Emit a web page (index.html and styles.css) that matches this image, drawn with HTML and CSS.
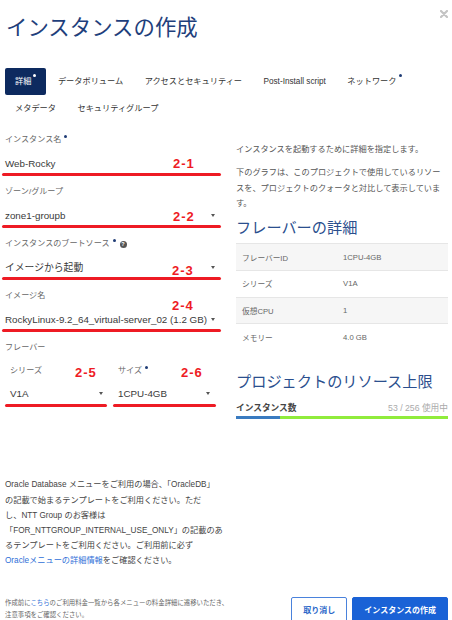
FILE: index.html
```html
<!DOCTYPE html>
<html lang="ja">
<head>
<meta charset="utf-8">
<title>インスタンスの作成</title>
<link rel="stylesheet" href="styles.css">
</head>
<body>
<div class="modal">
  <header class="head">
    <h1 class="title">インスタンスの作成</h1>
    <span class="close"><svg width="8" height="8" viewBox="0 0 8 8"><path d="M1 1L7 7M7 1L1 7" stroke="#c4c4c4" stroke-width="2.2" stroke-linecap="round"/></svg></span>
  </header>

  <nav class="tabs">
    <span class="tab active">詳細<i class="dot"></i></span>
    <span class="tab">データボリューム</span>
    <span class="tab">アクセスとセキュリティー</span>
    <span class="tab">Post-Install script</span>
    <span class="tab">ネットワーク<i class="dot"></i></span>
    <span class="tab">メタデータ</span>
    <span class="tab">セキュリティグループ</span>
  </nav>

  <div class="body">
    <div class="left">
      <div class="field">
        <div class="label">インスタンス名<i class="req"></i></div>
        <div class="control"><span>Web-Rocky</span></div>
        <div class="redline"></div>
        <span class="mark m1">2-1</span>
      </div>
      <div class="field">
        <div class="label">ゾーン/グループ</div>
        <div class="control"><span>zone1-groupb</span><i class="caret"></i></div>
        <div class="redline"></div>
        <span class="mark m2">2-2</span>
      </div>
      <div class="field">
        <div class="label">インスタンスのブートソース<i class="req"></i><span class="help">?</span></div>
        <div class="control"><span>イメージから起動</span><i class="caret"></i></div>
        <div class="redline"></div>
        <span class="mark m3">2-3</span>
      </div>
      <div class="field">
        <div class="label">イメージ名</div>
        <div class="control"><span>RockyLinux-9.2_64_virtual-server_02 (1.2 GB)</span><i class="caret"></i></div>
        <div class="redline"></div>
        <span class="mark m4">2-4</span>
      </div>
      <div class="flavor">
        <div class="label">フレーバー</div>
        <div class="flavor-row">
          <div class="sub">
            <div class="label sub-label">シリーズ</div>
            <div class="control sub-control"><span>V1A</span><i class="caret"></i></div>
            <div class="redline sub-line"></div>
            <span class="mark m5">2-5</span>
          </div>
          <div class="sub">
            <div class="label sub-label">サイズ<i class="req"></i></div>
            <div class="control sub-control"><span>1CPU-4GB</span><i class="caret caret-r"></i></div>
            <div class="redline sub-line"></div>
            <span class="mark m6">2-6</span>
          </div>
        </div>
      </div>

      <p class="note">Oracle Database メニューをご利用の場合、「OracleDB」<br>の記載で始まるテンプレートをご利用ください。ただ<br>し、NTT Group のお客様は<br>「FOR_NTTGROUP_INTERNAL_USE_ONLY」の記載のあ<br>るテンプレートをご利用ください。ご利用前に必ず<br><a href="#">Oracleメニューの詳細情報</a>をご確認ください。</p>
    </div>

    <div class="right">
      <p class="desc">インスタンスを起動するために詳細を指定します。</p>
      <p class="desc">下のグラフは、このプロジェクトで使用しているリソースを、プロジェクトのクォータと対比して表示しています。</p>
      <h2 class="h2">フレーバーの詳細</h2>
      <div class="spec">
        <div class="spec-row"><span>フレーバーID</span><span>1CPU-4GB</span></div>
        <div class="spec-row"><span>シリーズ</span><span>V1A</span></div>
        <div class="spec-row"><span>仮想CPU</span><span>1</span></div>
        <div class="spec-row"><span>メモリー</span><span>4.0 GB</span></div>
      </div>
      <h2 class="h2 h2-limit">プロジェクトのリソース上限</h2>
      <div class="usage"><b>インスタンス数</b><span>53 / 256 使用中</span></div>
      <div class="bar"><div class="fill" style="width:20.7%"></div></div>
    </div>
  </div>

  <footer class="foot">
    <p class="fine">作成前に<a href="#">こちら</a>のご利用料金一覧から各メニューの料金詳細に遷移いただき、<br>注意事項をご確認ください。</p>
    <div class="actions">
      <button class="btn btn-ghost">取り消し</button>
      <button class="btn btn-primary">インスタンスの作成</button>
    </div>
  </footer>
</div>
</body>
</html>
```

FILE: styles.css
```css
html, body {
  margin: 0;
  padding: 0;
  overflow: hidden;
  background: #fff;
}
body {
  font-family: "Liberation Sans", "Noto Sans CJK JP", sans-serif;
  color: #333;
}
.modal {
  width: 452px;
  height: 620px;
  box-sizing: border-box;
  padding: 0 4px 0 5px;
}
.head {
  display: flex;
  justify-content: space-between;
  align-items: flex-start;
  padding-top: 12px;
}
.title {
  margin: 0 0 0 1px;
  font-size: 21.4px;
  line-height: 32px;
  font-weight: 400;
  color: #1f3f7c;
}
.close {
  display: block;
  width: 8px;
  height: 8px;
  margin-top: -2px;
}
.close svg { display: block; }

/* tabs */
.tabs {
  display: flex;
  flex-wrap: wrap;
  margin-top: 24px;
}
.tab {
  height: 27px;
  line-height: 27px;
  padding: 0 10px;
  margin-right: 1.5px;
  font-size: 8.2px;
  color: #333;
  white-space: nowrap;
  border-radius: 2px;
}
.tab.active {
  background: #0d2a5f;
  color: #fff;
}
.dot {
  display: inline-block;
  width: 3px;
  height: 3px;
  border-radius: 50%;
  background: #1f3c75;
  vertical-align: top;
  margin: 6px 0 0 2px;
}
.tab.active .dot { background: #fff; }

/* body */
.body {
  display: flex;
  margin-top: 11px;
}
.left {
  width: 214px;
  flex: none;
}
.right {
  width: 212px;
  flex: none;
  margin-left: 17px;
  padding-top: 9px;
}

.field {
  position: relative;
  margin-bottom: 9px;
}
.label {
  font-size: 8.1px;
  line-height: 14px;
  height: 14px;
  color: #666;
  white-space: nowrap;
}
.req {
  display: inline-block;
  width: 3px;
  height: 3px;
  border-radius: 50%;
  background: #1f3c75;
  vertical-align: top;
  margin: 2px 0 0 3px;
}
.help {
  display: inline-block;
  width: 7px;
  height: 7px;
  border-radius: 50%;
  background: #555;
  color: #fff;
  font-size: 5.5px;
  line-height: 7px;
  text-align: center;
  font-weight: bold;
  vertical-align: top;
  margin: 4px 0 0 4px;
}
.control {
  display: flex;
  align-items: center;
  justify-content: space-between;
  margin-top: 8px;
  height: 16px;
  font-size: 9.8px;
  color: #3a3a3a;
  white-space: nowrap;
}
.caret {
  display: block;
  width: 0;
  height: 0;
  border-left: 2.5px solid transparent;
  border-right: 2.5px solid transparent;
  border-top: 3px solid #555;
  margin-right: 4px;
}
.redline {
  height: 3px;
  border-radius: 2px;
  background: #ee1b24;
  margin: 2px -2px 0 -3px;
}
.mark {
  position: absolute;
  font: bold 13px/14px "Liberation Sans", sans-serif;
  color: #ee1b24;
  letter-spacing: 1px;
}
.m1 { left: 168px; top: 24px; }
.m2 { left: 168px; top: 25px; }
.m3 { left: 167px; top: 27px; }
.m4 { left: 167px; top: 10px; }
.m5 { left: 70px; top: 2px; }
.m6 { left: 68px; top: 2px; }

.flavor-row {
  display: grid;
  grid-template-columns: 102px 103px;
  column-gap: 6px;
  margin-top: 8.7px;
}
.sub { position: relative; }
.sub-label { padding-left: 5px; }
.sub-control { padding: 0 0 0 5px; }
.sub .caret { margin-right: 4px; }
.sub .caret-r { margin-right: 6px; }
.sub-line { margin: 2px 0 0 0; }

.note {
  margin: 70.7px 0 0;
  font-size: 8.2px;
  line-height: 15.2px;
  color: #444;
  white-space: nowrap;
}
.note a {
  color: #2f6fd8;
  text-decoration: none;
}

/* right column */
.desc {
  margin: 0;
  font-size: 8.2px;
  line-height: 15.5px;
  color: #555;
}
.desc + .desc { margin-top: 7.75px; }
.h2 {
  margin: 5px 0 4.5px;
  font-size: 15.2px;
  line-height: 22px;
  font-weight: 400;
  color: #2b4f8e;
}
.spec-row {
  display: grid;
  grid-template-columns: 95px 1fr;
  column-gap: 6px;
  align-items: center;
  height: 26.7px;
  box-sizing: border-box;
  border-top: 1px solid #e6e6e6;
  padding-left: 6px;
  font-size: 7.7px;
  color: #666;
}
.spec-row:nth-child(odd) { background: #f6f6f6; }

.h2-limit { margin-top: 20.5px; margin-bottom: 9px; }
.usage {
  display: flex;
  justify-content: space-between;
  align-items: center;
  line-height: 12px;
  height: 12px;
}
.usage b {
  font-size: 8.7px;
  color: #444;
}
.usage span {
  font-size: 8.7px;
  color: #aaa;
}
.bar {
  display: flex;
  height: 3.5px;
  margin-top: 2px;
  background: #90ec3c;
}
.bar .fill { background: #3a7bc0; }

/* footer */
.foot {
  display: flex;
  justify-content: space-between;
  align-items: flex-start;
  margin-top: 28.4px;
}
.fine {
  margin: 0;
  font-size: 6.4px;
  line-height: 12px;
  color: #666;
  white-space: nowrap;
}
.fine a {
  color: #2f6fd8;
  text-decoration: none;
}
.actions {
  display: flex;
  gap: 5px;
}
.btn {
  height: 26px;
  box-sizing: border-box;
  border-radius: 2px;
  font-family: "Liberation Sans", "Noto Sans CJK JP", sans-serif;
  font-size: 8px;
  font-weight: bold;
  padding: 0 11px;
  display: flex;
  align-items: center;
  cursor: pointer;
}
.btn-ghost {
  border: 1px solid #4a82dc;
  color: #2c68c9;
  background: #fff;
}
.btn-primary {
  border: 1px solid #1a62d6;
  background: #1a62d6;
  color: #fff;
}
```
